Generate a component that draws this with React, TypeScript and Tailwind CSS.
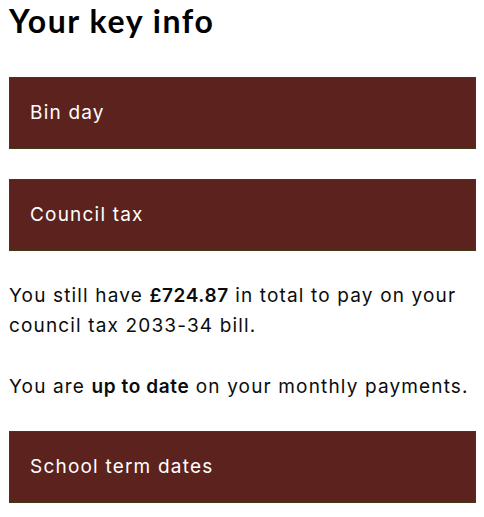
export default function App() {
  const panels = ['Bin day', 'Council tax', 'School term dates'];

  return (
    <main className="bg-white pl-[9px] pr-[8px] pt-0 text-[#0b0c0c] font-['Inter',sans-serif]">
      <h2 className="font-['Lato','Inter',sans-serif] text-[32px] font-bold leading-[42px] tracking-[1.6px] text-black">
        Your key info
      </h2>

      <div className="mt-[35px] flex h-[72px] items-center border border-[#3f3a18] bg-[#5c231e] px-5">
        <span className="text-[19px] tracking-[1.2px] text-white">{panels[0]}</span>
      </div>

      <div className="mt-[30px] flex h-[72px] items-center border border-[#3f3a18] bg-[#5c231e] px-5">
        <span className="text-[19px] tracking-[1.2px] text-white">{panels[1]}</span>
      </div>

      <div className="mt-[30px] text-[19px] leading-[30px] tracking-[1.15px]">
        <p>
          You still have <strong className="font-semibold tracking-[0.6px]">£724.87</strong> in total to pay on your council tax 2033-34 bill.
        </p>
        <p className="mt-[31px]">
          You are <strong className="font-semibold tracking-[0.6px]">up to date</strong> on your monthly payments.
        </p>
      </div>

      <div className="mt-[29px] flex h-[72px] items-center border border-[#3f3a18] bg-[#5c231e] px-5">
        <span className="text-[19px] tracking-[1.2px] text-white">{panels[2]}</span>
      </div>
    </main>
  );
}
